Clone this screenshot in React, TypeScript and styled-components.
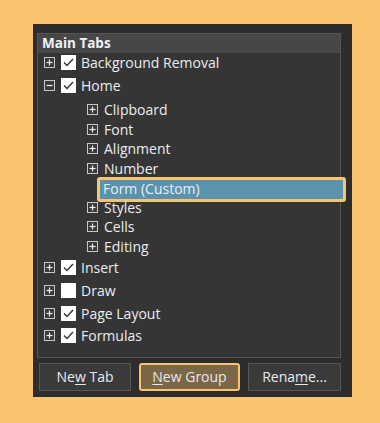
import React from "react";
import styled, { createGlobalStyle } from "styled-components";

const GlobalStyle = createGlobalStyle`
  html, body {
    margin: 0;
    background: #f8c471;
  }
  body {
    font-family: "Open Sans", "Noto Sans", sans-serif;
  }
`;

interface TreeNode {
  label: string;
  checked?: boolean;
  expanded?: boolean;
  children?: string[];
}

const tabs: TreeNode[] = [
  { label: "Background Removal", checked: true },
  {
    label: "Home",
    checked: true,
    expanded: true,
    children: [
      "Clipboard",
      "Font",
      "Alignment",
      "Number",
      "Form (Custom)",
      "Styles",
      "Cells",
      "Editing",
    ],
  },
  { label: "Insert", checked: true },
  { label: "Draw", checked: false },
  { label: "Page Layout", checked: true },
  { label: "Formulas", checked: true },
];

const selectedGroup = "Form (Custom)";

// Styled Components
const Page = styled.div`
  width: 380px;
  height: 423px;
  padding: 24px 0 0 33px;
  box-sizing: border-box;
`;

const Panel = styled.div`
  width: 319px;
  height: 373px;
  box-sizing: border-box;
  background: #2d2d2d;
  padding: 9px 11px 6px 4px;
  display: flex;
  flex-direction: column;
  gap: 5px;
`;

const TreeBox = styled.div`
  height: 325px;
  box-sizing: border-box;
  border: 1px solid #555555;
  background: #353535;
  display: flex;
  flex-direction: column;
`;

const Header = styled.div`
  height: 19px;
  background: #474747;
  color: #eef2f6;
  font-weight: 700;
  font-size: 13.5px;
  line-height: 19px;
  padding-left: 4px;
`;

const Row = styled.div<{ $child?: boolean }>`
  height: ${(p) => (p.$child ? "19.5px" : "22.8px")};
  box-sizing: border-box;
  display: flex;
  align-items: center;
  padding-left: ${(p) => (p.$child ? "49px" : "6px")};
  padding-bottom: 3px;
  color: #eaeef3;
  font-size: 14px;
  white-space: nowrap;
`;

const Children = styled.div`
  padding-top: 3px;
`;

const Expander = styled.svg`
  flex: none;
  width: 11px;
  height: 11px;
`;

const Check = styled.div`
  flex: none;
  width: 15px;
  height: 15px;
  margin-left: 6px;
  margin-right: 5px;
  background: #ffffff;
  display: flex;
  align-items: center;
  justify-content: center;
`;

const Label = styled.span`
  margin-left: 6px;
`;

const Highlight = styled.div`
  flex: 1;
  height: 25px;
  box-sizing: border-box;
  margin: 3px -6px 0 10px;
  padding-left: 3px;
  padding-bottom: 2px;
  border: 3px solid #f8c471;
  border-radius: 3px;
  background: #5b93ad;
  display: flex;
  align-items: center;
  position: relative;
  z-index: 1;
`;

const ButtonRow = styled.div`
  display: flex;
  gap: 8px;
  padding-left: 2px;
`;

const Button = styled.button<{ $active?: boolean; $w: number }>`
  width: ${(p) => p.$w}px;
  height: 28px;
  box-sizing: border-box;
  font-family: "Open Sans", "Noto Sans", sans-serif;
  font-size: 14px;
  color: #e6e9ee;
  background: ${(p) => (p.$active ? "#7b6646" : "#3a3a3a")};
  border: ${(p) => (p.$active ? "2px solid #f8c471" : "1px solid #565656")};
  border-radius: ${(p) => (p.$active ? "3px" : "0")};
  padding: 0 0 2px;
  cursor: pointer;

  u {
    text-decoration-thickness: 1px;
    text-underline-offset: 2px;
  }
`;

const ExpandIcon: React.FC<{ open?: boolean }> = ({ open }) => (
  <Expander viewBox="0 0 11 11">
    <rect x="0.5" y="0.5" width="10" height="10" fill="#3a3a3a" stroke="#c8c8c8" />
    <line x1="2.5" y1="5.5" x2="8.5" y2="5.5" stroke="#f0f0f0" strokeWidth="1.2" />
    {!open && (
      <line x1="5.5" y1="2.5" x2="5.5" y2="8.5" stroke="#f0f0f0" strokeWidth="1.2" />
    )}
  </Expander>
);

const CheckBox: React.FC<{ on: boolean }> = ({ on }) => (
  <Check>
    {on && (
      <svg width="13" height="13" viewBox="0 0 13 13">
        <polyline
          points="2,6.5 5,9.5 11,3"
          fill="none"
          stroke="#333333"
          strokeWidth="1.4"
        />
      </svg>
    )}
  </Check>
);

const App: React.FC = () => {
  return (
    <>
      <GlobalStyle />
      <Page>
        <Panel>
          <TreeBox>
            <Header>Main Tabs</Header>
            {tabs.map((tab) => (
              <React.Fragment key={tab.label}>
                <Row>
                  <ExpandIcon open={tab.expanded} />
                  <CheckBox on={!!tab.checked} />
                  {tab.label}
                </Row>
                {tab.expanded && tab.children && (
                  <Children>
                    {tab.children.map((c) =>
                      c === selectedGroup ? (
                        <Row $child key={c}>
                          <Highlight>{c}</Highlight>
                        </Row>
                      ) : (
                        <Row $child key={c}>
                          <ExpandIcon />
                          <Label>{c}</Label>
                        </Row>
                      )
                    )}
                  </Children>
                )}
              </React.Fragment>
            ))}
          </TreeBox>
          <ButtonRow>
            <Button $w={92}>
              Ne<u>w</u> Tab
            </Button>
            <Button $w={101} $active>
              <u>N</u>ew Group
            </Button>
            <Button $w={93}>
              Rena<u>m</u>e...
            </Button>
          </ButtonRow>
        </Panel>
      </Page>
    </>
  );
};

export default App;
